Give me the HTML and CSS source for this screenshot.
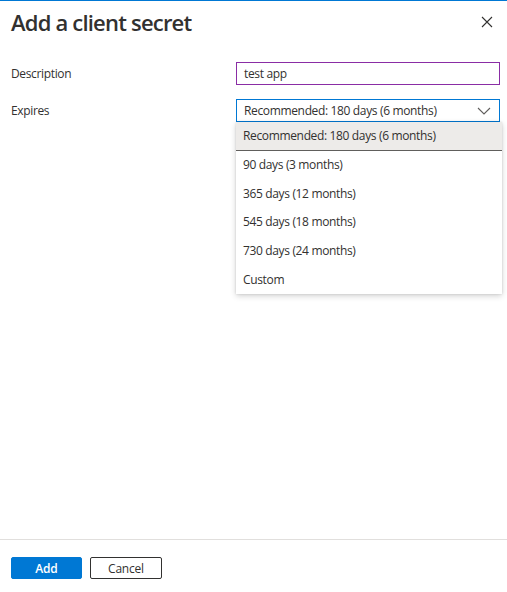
FILE: index.html
```html
<!DOCTYPE html>
<html>
<head>
<meta charset="utf-8">
<link rel="stylesheet" href="styles.css">
</head>
<body>
<div class="panel">
  <div class="header">
    <h1 class="title">Add a client secret</h1>
    <button class="close" aria-label="Close">
      <svg width="12" height="12" viewBox="0 0 12 12"><path d="M1 1 L11 11 M11 1 L1 11" stroke="#323130" stroke-width="1.1" fill="none"/></svg>
    </button>
  </div>
  <div class="form">
    <div class="row row-desc">
      <label class="label">Description</label>
      <div class="field">
        <div class="input">test app</div>
      </div>
    </div>
    <div class="row row-exp">
      <label class="label">Expires</label>
      <div class="field">
        <div class="select">
          <span>Recommended: 180 days (6 months)</span>
          <svg class="chev" width="14" height="8" viewBox="0 0 14 8"><path d="M1 1 L7 7 L13 1" stroke="#605e5c" stroke-width="1.1" fill="none"/></svg>
        </div>
        <ul class="menu">
          <li class="item selected">Recommended: 180 days (6 months)</li>
          <li class="item">90 days (3 months)</li>
          <li class="item">365 days (12 months)</li>
          <li class="item">545 days (18 months)</li>
          <li class="item">730 days (24 months)</li>
          <li class="item">Custom</li>
        </ul>
      </div>
    </div>
  </div>
  <div class="spacer"></div>
  <div class="footer">
    <button class="btn primary">Add</button>
    <button class="btn secondary">Cancel</button>
  </div>
</div>
</body>
</html>
```
FILE: styles.css
```css
* { box-sizing: border-box; }
html, body { margin: 0; padding: 0; background: #fff; }
body {
  font-family: "Open Sans", "Noto Sans", "Liberation Sans", sans-serif;
  color: #323130;
  font-size: 12px;
  letter-spacing: -0.35px;
}
.panel {
  width: 507px;
  height: 592px;
  border-top: 1px solid #0078d4;
  display: flex;
  flex-direction: column;
}
.header {
  display: flex;
  align-items: center;
  justify-content: space-between;
  padding: 1px 14px 0 11px;
  height: 40px;
}
.title {
  margin: 0;
  font-size: 22px;
  font-weight: 600;
  letter-spacing: -0.8px;
  color: #323130;
}
.close {
  border: 0;
  background: none;
  padding: 0;
  width: 12px;
  height: 12px;
  display: flex;
}
.form {
  padding: 21px 7px 0 11px;
  display: flex;
  flex-direction: column;
  gap: 14px;
}
.row {
  display: grid;
  grid-template-columns: 225px 264px;
  align-items: start;
}
.label {
  line-height: 23px;
  font-size: 12px;
}
.field { position: relative; }
.input, .select {
  height: 23px;
  border: 1px solid #8a2da5;
  padding: 0 7px;
  line-height: 20px;
  font-size: 12px;
  display: flex;
  align-items: center;
}
.select {
  border-color: #0078d4;
  justify-content: space-between;
  padding-right: 8px;
}
.chev { display: block; }
.menu {
  position: absolute;
  top: 23px;
  left: 0;
  width: 266px;
  margin: 0;
  padding: 0;
  list-style: none;
  background: #fff;
  box-shadow: 0 2px 6px rgba(0,0,0,0.18), 0 0 2px rgba(0,0,0,0.12);
}
.item {
  height: 28.7px;
  display: flex;
  align-items: center;
  padding: 0 7px 1px;
  font-size: 12px;
}
.item.selected {
  background: #edebe9;
  border-bottom: 1px solid #605e5c;
}
.spacer { flex: 1; }
.footer {
  border-top: 1px solid #e1dfdd;
  height: 53px;
  padding: 17px 11px 0;
  display: flex;
  gap: 8px;
  align-items: flex-start;
}
.btn {
  height: 22px;
  width: 72px;
  font-family: inherit;
  font-size: 12px;
  letter-spacing: -0.2px;
  border-radius: 2px;
  padding: 0;
}
.primary {
  background: #0078d4;
  color: #fff;
  border: 1px solid #0078d4;
  font-weight: 600;
  width: 71px;
}
.secondary {
  background: #fff;
  color: #323130;
  border: 1px solid #323130;
}
```
